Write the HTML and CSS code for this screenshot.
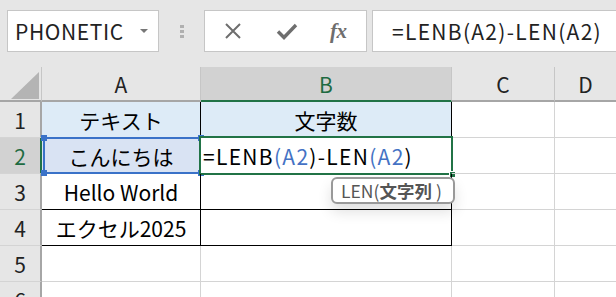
FILE: index.html
```html
<!DOCTYPE html>
<html lang="ja">
<head>
<meta charset="utf-8">
<link rel="stylesheet" href="styles.css">
</head>
<body>
<div class="app">
  <div class="toolbar">
    <div class="namebox">
      <span class="name">PHONETIC</span>
      <span class="caret"></span>
    </div>
    <div class="grip"><i></i><i></i><i></i></div>
    <div class="fbtns">
      <svg class="ico" width="20" height="20" viewBox="0 0 20 20"><path d="M3 3 L17 17 M17 3 L3 17" stroke="#6e6e6e" stroke-width="2" fill="none"/></svg>
      <svg class="ico" width="22" height="20" viewBox="0 0 22 20"><path d="M2 10.5 L8 16.5 L20 4" stroke="#6e6e6e" stroke-width="3.4" fill="none"/></svg>
      <span class="fx">fx</span>
    </div>
    <div class="finput"><span class="ftext">=LENB(A2)-LEN(A2)</span></div>
  </div>
  <div class="sheet">
    <div class="hd corner"><span class="tri"></span></div>
    <div class="hd col">A</div>
    <div class="hd col sel">B</div>
    <div class="hd col">C</div>
    <div class="hd col last">D</div>

    <div class="hd row">1</div>
    <div class="c t tl head">テキスト</div>
    <div class="c t tr head">文字数</div>
    <div class="c"></div>
    <div class="c last"></div>

    <div class="hd row sel">2</div>
    <div class="c t tl ref">こんにちは<span class="refbox"><i class="k k1"></i><i class="k k2"></i><i class="k k3"></i><i class="k k4"></i></span></div>
    <div class="c t tr active"><span class="formula">=LENB<b>(A2</b>)-LEN<b>(A2</b>)</span><span class="actbox"><i class="fill"></i></span></div>
    <div class="c"></div>
    <div class="c last"></div>

    <div class="hd row">3</div>
    <div class="c t tl">Hello World</div>
    <div class="c t tr"></div>
    <div class="c"></div>
    <div class="c last"></div>

    <div class="hd row">4</div>
    <div class="c t tl">エクセル2025</div>
    <div class="c t tr"></div>
    <div class="c"></div>
    <div class="c last"></div>

    <div class="hd row">5</div>
    <div class="c"></div>
    <div class="c"></div>
    <div class="c"></div>
    <div class="c last"></div>

    <div class="hd row">6</div>
    <div class="c"></div>
    <div class="c"></div>
    <div class="c"></div>
    <div class="c last"></div>

    <div class="tip">LEN(<b>文字列</b><span class="rp">)</span></div>
  </div>
</div>
</body>
</html>
```

FILE: styles.css
```css
* { box-sizing: border-box; }
html, body { margin: 0; padding: 0; }
body {
  width: 616px;
  height: 297px;
  overflow: hidden;
  background: #ffffff;
  font-family: "Noto Sans CJK JP", "Noto Sans", sans-serif;
  color: #000;
}
.app { width: 616px; height: 297px; overflow: hidden; }

.toolbar {
  height: 67px;
  background: #e6e6e6;
  display: flex;
  align-items: flex-start;
  padding: 10px 0 0 7px;
}
.namebox {
  width: 152px;
  height: 42px;
  background: #fff;
  border: 1px solid #c6c6c6;
  display: flex;
  align-items: center;
  padding-left: 7px;
  position: relative;
}
.name {
  font-size: 21px;
  letter-spacing: 0.6px;
  color: #222;
}
.caret {
  position: absolute;
  right: 10px;
  top: 18px;
  width: 0; height: 0;
  border-left: 4px solid transparent;
  border-right: 4px solid transparent;
  border-top: 4px solid #777;
}
.grip {
  width: 45px;
  height: 42px;
  display: flex;
  flex-direction: column;
  align-items: center;
  justify-content: center;
  gap: 2px;
}
.grip i {
  display: block;
  width: 4px; height: 3px;
  background: #b0b0b0;
}
.fbtns {
  width: 163px;
  height: 42px;
  background: #fff;
  border: 1px solid #c6c6c6;
  display: flex;
  align-items: center;
  padding-left: 18px;
}
.ico { display: block; }
.fbtns .ico:nth-child(2) { margin-left: 33px; }
.fx {
  margin-left: 32px;
  font-family: "Liberation Serif", serif;
  font-style: italic;
  font-weight: bold;
  font-size: 21px;
  color: #6e6e6e;
  letter-spacing: -0.5px;
}
.finput {
  margin-left: 5px;
  flex: 1;
  height: 42px;
  background: #fff;
  border: 1px solid #c6c6c6;
  border-right: none;
  display: flex;
  align-items: center;
  padding-left: 19px;
  font-size: 21px;
  color: #222;
  white-space: nowrap;
}
.ftext, .formula { letter-spacing: 1.3px; }

.sheet {
  position: relative;
  display: grid;
  grid-template-columns: 42px 159px 251px 103px 61px;
  grid-template-rows: 35px repeat(6, 36px);
  font-size: 21px;
}
.hd {
  background: #e6e6e6;
  color: #222;
  display: flex;
  align-items: center;
  justify-content: center;
  font-size: 21px;
}
.hd.col {
  border-right: 1px solid #c6c6c6;
  border-bottom: 2px solid #a6a6a6;
}
.hd.col.last { border-right: none; }
.hd.col.sel {
  background: #d2d2d2;
  color: #1e6b41;
  border-bottom: 2px solid #217346;
}
.hd.corner {
  border-right: 1px solid #c6c6c6;
  border-bottom: 2px solid #a6a6a6;
  position: relative;
}
.tri {
  position: absolute;
  left: 11px;
  top: 5px;
  width: 28px;
  height: 27px;
  background: #b4b4b4;
  clip-path: polygon(100% 0, 100% 100%, 0 100%);
}
.hd.row {
  border-right: 2px solid #a6a6a6;
  border-bottom: 1px solid #d4d4d4;
}
.hd.row.sel {
  background: #d2d2d2;
  color: #1e6b41;
  border-right: 2px solid #217346;
}
.c {
  border-right: 1px solid #d4d4d4;
  border-bottom: 1px solid #d4d4d4;
  display: flex;
  align-items: center;
  justify-content: center;
  white-space: nowrap;
  position: relative;
}
.c.last { border-right: none; }
.c.t { border-bottom: 1px solid #000; }
.c.tl { border-right: 1px solid #000; }
.c.tr { border-right: 1px solid #000; }
.c.head { background: #ddebf7; }
.c.ref { background: #d9e3f3; }
.c.active { justify-content: flex-start; padding-left: 2px; background: #fff; }
.formula b { font-weight: normal; color: #4472c4; }

.refbox {
  position: absolute;
  left: 1px; top: -1px; right: -2px; bottom: -1px;
  border: 2px solid #3a72c8;
}
.k {
  position: absolute;
  width: 6px; height: 6px;
  background: #3a72c8;
}
.k1 { left: -4px; top: -4px; }
.k2 { right: -4px; top: -4px; }
.k3 { left: -4px; bottom: -4px; }
.k4 { right: -4px; bottom: -4px; }

.actbox {
  position: absolute;
  left: -2px; top: -2px; right: -2px; bottom: -2px;
  border: 2px solid #217346;
}
.fill {
  position: absolute;
  right: -5px; bottom: -5px;
  width: 7px; height: 7px;
  background: #217346;
  border: 1px solid #fff;
}

.tip {
  position: absolute;
  left: 331px;
  top: 110px;
  width: 124px;
  height: 27px;
  background: #fff;
  border: 2px solid #999;
  border-radius: 6px;
  box-shadow: 0 8px 14px rgba(0,0,0,0.12);
  font-size: 17.5px;
  color: #555;
  display: flex;
  align-items: center;
  padding-left: 8px;
  white-space: nowrap;
}
.tip b { font-weight: bold; color: #555; }
.tip .rp { margin-left: 4px; }
```
